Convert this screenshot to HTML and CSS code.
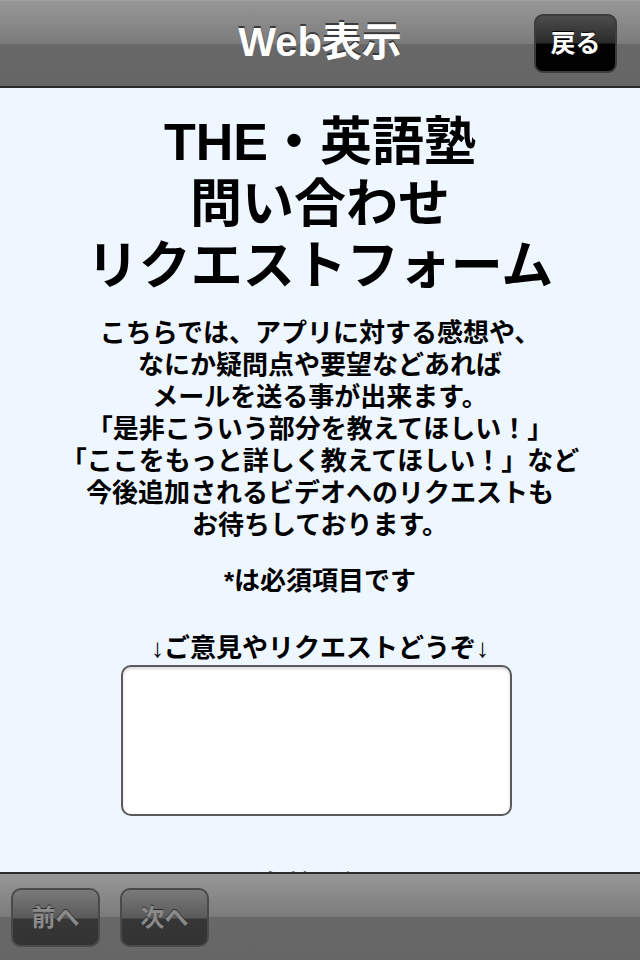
FILE: index.html
```html
<!DOCTYPE html>
<html lang="ja">
<head>
<meta charset="utf-8">
<title>Web表示</title>
<link rel="stylesheet" href="styles.css">
</head>
<body>
<div class="screen">
  <header class="navbar">
    <h1 class="nav-title">Web表示</h1>
    <button class="back-btn">戻る</button>
  </header>
  <main class="content">
    <h2 class="form-title">THE・英語塾<br>問い合わせ<br>リクエストフォーム</h2>
    <p class="intro">こちらでは、アプリに対する感想や、<br>なにか疑問点や要望などあれば<br>メールを送る事が出来ます。<br>「是非こういう部分を教えてほしい！」<br>「ここをもっと詳しく教えてほしい！」など<br>今後追加されるビデオへのリクエストも<br>お待ちしております。</p>
    <p class="note">*は必須項目です</p>
    <p class="label">↓ご意見やリクエストどうぞ↓</p>
    <textarea class="request"></textarea>
    <p class="label next">*お名前（必須）</p>
  </main>
  <footer class="toolbar">
    <button class="tool-btn">前へ</button>
    <button class="tool-btn">次へ</button>
  </footer>
</div>
</body>
</html>
```
FILE: styles.css
```css
html, body {
  margin: 0;
  padding: 0;
}
body {
  font-family: "Liberation Sans", "Noto Sans CJK JP", sans-serif;
  background: #eef6ff;
}
.screen {
  width: 640px;
  height: 960px;
  display: flex;
  flex-direction: column;
  overflow: hidden;
}
.navbar {
  position: relative;
  height: 86px;
  flex: none;
  display: flex;
  align-items: center;
  justify-content: center;
  background: linear-gradient(to bottom, #a9a9a9 0, #979797 1px, #7b7b7b 44px, #686868 44px, #666666 86px);
  border-bottom: 2px solid #2b2b2b;
}
.nav-title {
  margin: 0 0 3px;
  font-size: 40px;
  line-height: 48px;
  font-weight: bold;
  color: #ffffff;
  text-shadow: 0 -2px 0 #3a3a3a;
}
.back-btn {
  position: absolute;
  right: 23px;
  top: 14px;
  width: 83px;
  height: 59px;
  border: 2px solid #3c3c3c;
  border-radius: 9px;
  background: linear-gradient(to bottom, #4c4c4c 0, #2a2a2a 27px, #020202 28px, #000000 100%);
  color: #ffffff;
  font-family: "Noto Sans CJK JP", sans-serif;
  font-size: 25px;
  line-height: 30px;
  font-weight: bold;
  padding: 0 0 6px;
  text-shadow: 0 -1px 0 #000;
}
.content {
  flex: 1;
  overflow: hidden;
  display: flex;
  flex-direction: column;
  align-items: center;
  text-align: center;
  color: #000;
  box-sizing: border-box;
  padding-top: 23px;
}
.content > * {
  flex-shrink: 0;
}
.form-title {
  margin: 0;
  font-size: 52px;
  line-height: 62px;
  font-weight: bold;
  white-space: nowrap;
}
.intro {
  margin: 20px 0 0;
  font-size: 26px;
  line-height: 32px;
  font-weight: bold;
  white-space: nowrap;
}
.note {
  margin: 24px 0 0;
  font-size: 26px;
  line-height: 32px;
  font-weight: bold;
}
.label {
  margin: 35px 0 0;
  font-size: 26px;
  line-height: 32px;
  font-weight: bold;
  white-space: nowrap;
}
.request {
  margin: 1px 8px 0 0;
  width: 391px;
  height: 151px;
  box-sizing: border-box;
  border: 2px solid #5a5a5a;
  border-radius: 10px;
  background: #ffffff;
  box-shadow: inset 0 2px 3px rgba(0, 0, 0, 0.15);
  resize: none;
}
.label.next {
  margin-top: 53px;
}
.toolbar {
  height: 86px;
  flex: none;
  display: flex;
  align-items: center;
  gap: 20px;
  padding-left: 11px;
  background: linear-gradient(to bottom, #a0a0a0 0, #969696 1px, #7b7b7b 43px, #686868 43px, #666666 86px);
  border-top: 2px solid #2b2b2b;
}
.tool-btn {
  width: 89px;
  height: 59px;
  border: 2px solid #4a4a4a;
  border-radius: 10px;
  padding: 0 0 4px;
  background: linear-gradient(to bottom, #7a7a7a 0, #5a5a5a 28px, #363636 29px, #333333 100%);
  color: #8a8a8a;
  font-family: "Noto Sans CJK JP", sans-serif;
  font-size: 24px;
  font-weight: bold;
  text-shadow: 0 -1px 0 #2a2a2a;
}
```
